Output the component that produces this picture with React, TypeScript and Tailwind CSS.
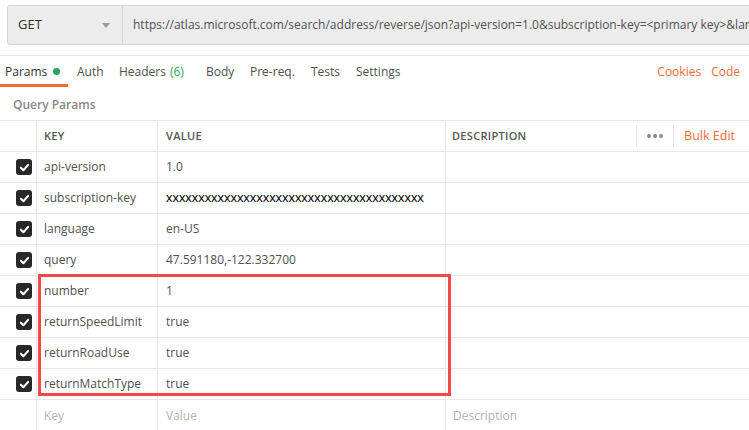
const rows = [
  { key: 'api-version', value: '1.0' },
  { key: 'subscription-key', value: 'x'.repeat(40), mono: true },
  { key: 'language', value: 'en-US' },
  { key: 'query', value: '47.591180,-122.332700' },
  { key: 'number', value: '1' },
  { key: 'returnSpeedLimit', value: 'true' },
  { key: 'returnRoadUse', value: 'true' },
  { key: 'returnMatchType', value: 'true' },
];

function Check() {
  return (
    <div className="w-4 h-4 rounded-[3px] bg-[#282828] flex items-center justify-center">
      <svg width="11" height="11" viewBox="0 0 12 12" fill="none">
        <path d="M2 6.2 L4.8 9 L10 3.2" stroke="white" strokeWidth="2.2" strokeLinecap="round" strokeLinejoin="round" />
      </svg>
    </div>
  );
}

export default function App() {
  return (
    <div className="relative w-[749px] h-[430px] overflow-hidden bg-white text-[12px] text-[#505050] font-['Open_Sans',sans-serif]">
      {/* url bar */}
      <div className="mt-[5px] ml-[7px] h-[40px] flex w-[760px] bg-[#ececec] border border-[#d6d6d6] rounded-l-[3px]">
        <div className="w-[115px] flex items-center justify-between pl-[10px] pr-[12px] border-r border-[#d6d6d6] text-[#333] text-[13px]">
          <span>GET</span>
          <span className="w-0 h-0 border-l-[4px] border-r-[4px] border-t-[5px] border-l-transparent border-r-transparent border-t-[#999]" />
        </div>
        <div className="flex-1 flex items-center pl-[10px] whitespace-nowrap overflow-hidden">
          https://atlas.microsoft.com/search/address/reverse/json?api-version=1.0&amp;subscription-key=&lt;primary key&gt;&amp;language=en-US
        </div>
      </div>

      <div className="mt-[10px] h-px bg-[#e8e8e8]" />

      {/* tabs */}
      <div className="h-[31px] flex items-stretch whitespace-nowrap">
        <div className="relative w-[77px] flex items-center">
          <div className="relative w-[68px] h-full flex items-center pl-[5px] text-[#333]">
            Params
            <span className="ml-[6px] w-[7px] h-[7px] rounded-full bg-[#26a65b]" />
            <div className="absolute left-0 right-0 bottom-0 h-[3px] bg-[#f26b3a]" />
          </div>
        </div>
        <div className="w-[42px] flex items-center">Auth</div>
        <div className="w-[87px] flex items-center">
          Headers <span className="ml-[4px] text-[#26a65b]">(6)</span>
        </div>
        <div className="w-[44px] flex items-center">Body</div>
        <div className="w-[61px] flex items-center">Pre-req.</div>
        <div className="w-[45px] flex items-center">Tests</div>
        <div className="flex items-center">Settings</div>
        <div className="ml-auto flex items-center gap-[10px] pr-[9px] text-[#f26b3a]">
          <span>Cookies</span>
          <span>Code</span>
        </div>
      </div>

      <div className="h-[33px] flex items-center pl-[13px] pt-[2px] text-[#888] font-semibold">Query Params</div>

      {/* table */}
      <div className="border-t border-[#e6e6e6]">
        <div className="grid grid-cols-[37px_121px_288px_1fr] h-[31px] border-b border-[#e6e6e6] text-[11px] font-semibold text-[#555] tracking-[0.3px]">
          <div className="border-r border-[#e6e6e6]" />
          <div className="border-r border-[#e6e6e6] flex items-center pl-[7px]">KEY</div>
          <div className="border-r border-[#e6e6e6] flex items-center pl-[8px]">VALUE</div>
          <div className="flex items-center pl-[6px]">
            <span>DESCRIPTION</span>
            <div className="ml-auto flex items-center h-[22px]">
              <div className="h-full border-l border-[#e6e6e6]" />
              <div className="flex gap-[2px] px-[10px]">
                <span className="w-[4px] h-[4px] rounded-full bg-[#888]" />
                <span className="w-[4px] h-[4px] rounded-full bg-[#888]" />
                <span className="w-[4px] h-[4px] rounded-full bg-[#888]" />
              </div>
              <div className="h-full border-l border-[#e6e6e6]" />
              <span className="pl-[10px] pr-[14px] text-[12.5px] font-normal tracking-normal text-[#f26b3a]">Bulk Edit</span>
            </div>
          </div>
        </div>

        {rows.map((r) => (
          <div key={r.key} className="grid grid-cols-[37px_121px_288px_1fr] h-[31px] border-b border-[#e6e6e6]">
            <div className="border-r border-[#e6e6e6] flex items-center justify-end pr-[4px]">
              <Check />
            </div>
            <div className="border-r border-[#e6e6e6] flex items-center pl-[7px] whitespace-nowrap">{r.key}</div>
            <div className={'border-r border-[#e6e6e6] flex items-center pl-[8px] whitespace-nowrap overflow-hidden ' + (r.mono ? "font-['Liberation_Sans',sans-serif] text-black text-[12.9px]" : '')}>
              {r.value}
            </div>
            <div />
          </div>
        ))}

        <div className="grid grid-cols-[37px_121px_288px_1fr] h-[31px] text-[#b4b4b4]">
          <div className="border-r border-[#e6e6e6]" />
          <div className="border-r border-[#e6e6e6] flex items-center pl-[7px]">Key</div>
          <div className="border-r border-[#e6e6e6] flex items-center pl-[8px]">Value</div>
          <div className="flex items-center pl-[7px]">Description</div>
        </div>
      </div>

      {/* highlight */}
      <div className="absolute left-[38px] top-[274px] w-[413px] h-[122px] border-[3px] border-[#f44848]" />
    </div>
  );
}
